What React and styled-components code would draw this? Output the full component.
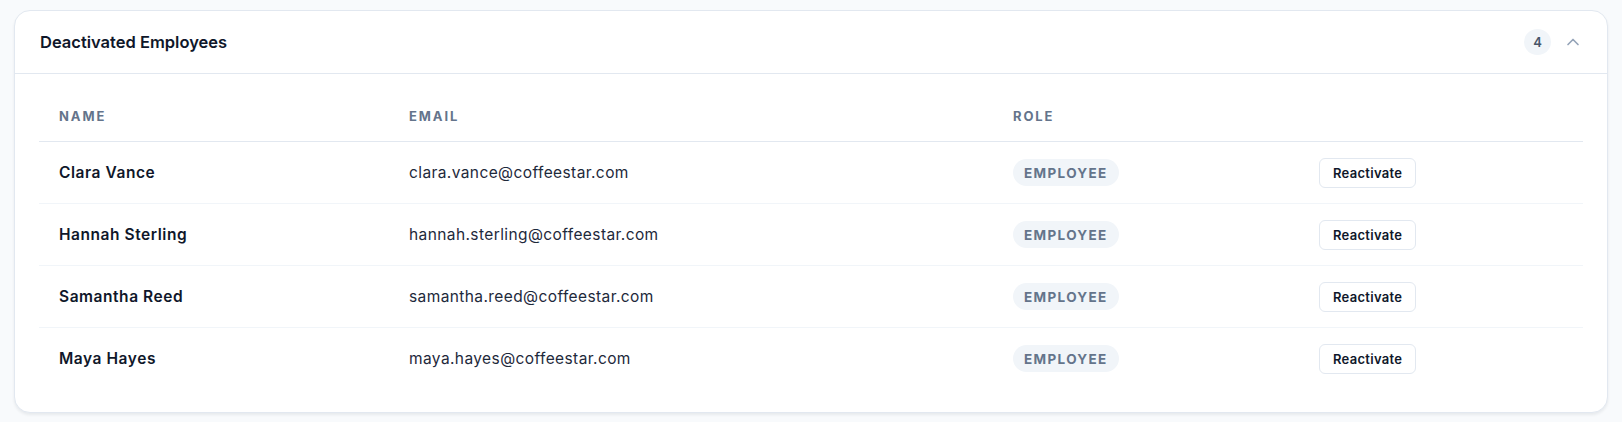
import React, { useState } from "react";
import styled, { createGlobalStyle } from "styled-components";
import { ChevronUp } from "lucide-react";

const GlobalStyle = createGlobalStyle`
  body {
    margin: 0;
    background: #f8fafc;
    font-family: Inter, "Noto Sans", sans-serif;
    color: #0f172a;
  }
`;

const employees = [
  { name: "Clara Vance", email: "clara.vance@coffeestar.com", role: "Employee" },
  { name: "Hannah Sterling", email: "hannah.sterling@coffeestar.com", role: "Employee" },
  { name: "Samantha Reed", email: "samantha.reed@coffeestar.com", role: "Employee" },
  { name: "Maya Hayes", email: "maya.hayes@coffeestar.com", role: "Employee" },
];

const Page = styled.div`
  padding: 10px 14px;
`;

const Card = styled.section`
  background: #fff;
  border: 1px solid #e2e8f0;
  border-radius: 16px;
  box-shadow: 0 2px 3px rgba(15, 23, 42, 0.07);
  overflow: hidden;
`;

const CardHeader = styled.header`
  display: flex;
  align-items: center;
  justify-content: space-between;
  height: 62px;
  padding: 0 24px 0 25px;
  border-bottom: 1px solid #e2e8f0;
`;

const Title = styled.h2`
  margin: 0;
  font-size: 16.5px;
  font-weight: 600;
  letter-spacing: 0;
  color: #0f172a;
`;

const HeaderTools = styled.div`
  display: flex;
  align-items: center;
  gap: 12px;
`;

const CountBadge = styled.span`
  display: inline-flex;
  align-items: center;
  justify-content: center;
  width: 27px;
  height: 26px;
  border-radius: 50%;
  background: #f1f5f9;
  color: #475569;
  font-size: 13px;
  font-weight: 600;
`;

const ToggleButton = styled.button`
  display: flex;
  padding: 0;
  border: none;
  background: none;
  color: #94a3b8;
  cursor: pointer;
`;

const TableWrap = styled.div`
  padding: 16px 24px 23px;
`;

const Row = styled.div`
  display: grid;
  grid-template-columns: 350px 604px 306px 1fr;
  align-items: center;
  height: ${(p) => (p.$head ? "51px" : "61px")};
  border-bottom: 1px solid ${(p) => (p.$head ? "#e2e8f0" : "#f1f5f9")};
  &:last-child {
    border-bottom: none;
  }
`;

const HeadCell = styled.div`
  padding: 1px 20px 0;
  font-size: 13px;
  font-weight: 700;
  letter-spacing: 1.9px;
  text-transform: uppercase;
  color: #64748b;
`;

const Cell = styled.div`
  padding: 0 20px;
  font-size: 15.5px;
  font-weight: ${(p) => (p.$strong ? 600 : 400)};
  letter-spacing: ${(p) => (p.$strong ? "0.55px" : "0.4px")};
  color: ${(p) => (p.$strong ? "#0f172a" : "#1e293b")};
`;

const RolePill = styled.span`
  display: inline-flex;
  align-items: center;
  height: 27px;
  padding: 0 11px;
  border-radius: 999px;
  background: #f1f5f9;
  color: #64748b;
  font-size: 13.5px;
  font-weight: 700;
  letter-spacing: 1.35px;
  text-transform: uppercase;
`;

const ActionButton = styled.button`
  height: 30px;
  padding: 0 13px;
  border: 1px solid #e2e8f0;
  border-radius: 6px;
  background: #fff;
  color: #0f172a;
  font-family: inherit;
  font-size: 13px;
  font-weight: 600;
  letter-spacing: 0.3px;
  cursor: pointer;
`;

export default function App() {
  const [open, setOpen] = useState(true);

  return (
    <Page>
      <GlobalStyle />
      <Card>
        <CardHeader>
          <Title>Deactivated Employees</Title>
          <HeaderTools>
            <CountBadge>{employees.length}</CountBadge>
            <ToggleButton onClick={() => setOpen(!open)}>
              <ChevronUp size={20} strokeWidth={2} />
            </ToggleButton>
          </HeaderTools>
        </CardHeader>
        {open && (
          <TableWrap>
            <Row $head>
              <HeadCell>Name</HeadCell>
              <HeadCell>Email</HeadCell>
              <HeadCell>Role</HeadCell>
              <HeadCell />
            </Row>
            {employees.map((e) => (
              <Row key={e.email}>
                <Cell $strong>{e.name}</Cell>
                <Cell>{e.email}</Cell>
                <Cell>
                  <RolePill>{e.role}</RolePill>
                </Cell>
                <Cell>
                  <ActionButton>Reactivate</ActionButton>
                </Cell>
              </Row>
            ))}
          </TableWrap>
        )}
      </Card>
    </Page>
  );
}
